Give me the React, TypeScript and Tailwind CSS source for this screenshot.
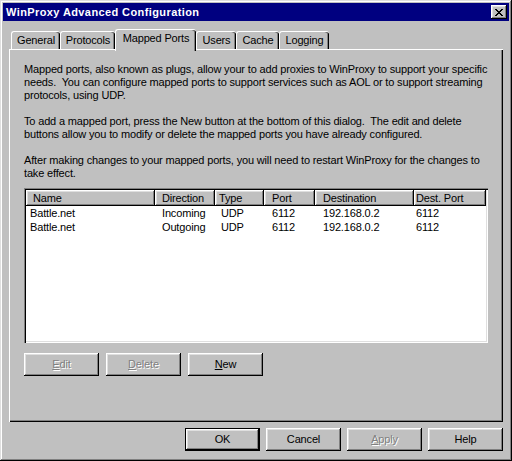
import type { ReactNode } from 'react'

const font = "font-['Liberation_Sans',Arial,sans-serif]"

const raised =
  'shadow-[inset_-1px_-1px_0_#000,inset_1px_1px_0_#fff,inset_-2px_-2px_0_#808080,inset_2px_2px_0_#dfdfdf]'

const tabs = [
  { label: 'General', w: 'w-[49px]' },
  { label: 'Protocols', w: 'w-[55px]' },
  { label: 'Mapped Ports', w: 'w-[81px]', active: true },
  { label: 'Users', w: 'w-[40px]' },
  { label: 'Cache', w: 'w-[43px]' },
  { label: 'Logging', w: 'w-[50px]' },
]

const columns = [
  { label: 'Name', w: 'w-[129px]', pl: 'pl-[7px]', rowPl: 'pl-[4px]' },
  { label: 'Direction', w: 'w-[60px]', pl: 'pl-[7px]', rowPl: 'pl-[7px]' },
  { label: 'Type', w: 'w-[49px]', pl: 'pl-[4px]', rowPl: 'pl-[6px]' },
  { label: 'Port', w: 'w-[51px]', pl: 'pl-[8px]', rowPl: 'pl-[8px]' },
  { label: 'Destination', w: 'w-[99px]', pl: 'pl-[8px]', rowPl: 'pl-[8px]' },
  { label: 'Dest. Port', w: 'w-[72px]', pl: 'pl-[2px]', rowPl: 'pl-[2px]' },
]

const rows = [
  ['Battle.net', 'Incoming', 'UDP', '6112', '192.168.0.2', '6112'],
  ['Battle.net', 'Outgoing', 'UDP', '6112', '192.168.0.2', '6112'],
]

function Button({
  children,
  disabled,
  isDefault,
}: {
  children: ReactNode
  disabled?: boolean
  isDefault?: boolean
}) {
  return (
    <button
      className={
        'flex h-[23px] w-[75px] items-center justify-center bg-[#c0c0c0] text-[11px] leading-none ' +
        (isDefault ? 'border border-black ' : '') +
        raised +
        ' ' +
        (disabled ? 'text-[#808080] [text-shadow:1px_1px_0_#fff]' : 'text-black')
      }
    >
      {children}
    </button>
  )
}

function Para({ lines, last }: { lines: string[]; last?: boolean }) {
  return (
    <div className={last ? 'mb-[8px]' : 'mb-[13px]'}>
      {lines.map((l) => (
        <div key={l} className="h-[13px] whitespace-pre leading-[13px]">
          {l}
        </div>
      ))}
    </div>
  )
}

export default function App() {
  return (
    <div
      className={`${font} flex h-[461px] w-[512px] flex-col bg-[#c0c0c0] p-[3px] text-[11px] tracking-[-0.16px] text-black shadow-[inset_-1px_-1px_0_#000,inset_1px_1px_0_#dfdfdf,inset_-2px_-2px_0_#808080,inset_2px_2px_0_#fff]`}
    >
      {/* title bar */}
      <div className="flex h-[18px] items-center justify-between bg-[#000080] pl-[3px] pr-[2px]">
        <span className="text-[11px] font-bold tracking-[0.4px] text-white">
          WinProxy Advanced Configuration
        </span>
        <div
          className={`flex h-[14px] w-[16px] items-center justify-center bg-[#c0c0c0] ${raised}`}
        >
          <svg width="8" height="7" viewBox="0 0 8 7" shapeRendering="crispEdges">
            <path
              d="M0 0h2v1h1v1h2V1h1V0h2v1H7v1H6v1H5v1h1v1h1v1h1v1H6V6H5V5H3v1H2v1H0V6h1V5h1V4h1V3H2V2H1V1H0z"
              fill="#000"
            />
          </svg>
        </div>
      </div>

      {/* tabs */}
      <div className="mt-[8px] flex h-[20px] items-end pl-[8px]">
        {tabs.map((t) => (
          <div
            key={t.label}
            className={
              `${t.w} flex items-start justify-center rounded-t-[3px] border-l border-t border-white bg-[#c0c0c0] shadow-[inset_-1px_0_0_#000,inset_-2px_0_0_#808080] ` +
              (t.active ? 'relative z-10 -mb-[2px] h-[22px] pt-[2px]' : 'h-[18px] pt-[2px]')
            }
          >
            <span className="leading-[13px]">{t.label}</span>
          </div>
        ))}
      </div>

      {/* panel */}
      <div className="mx-[6px] flex h-[373px] flex-col border-l border-t border-white px-[14px] pt-[13px] shadow-[inset_-1px_-1px_0_#000,inset_-2px_-2px_0_#808080]">
        <Para
          lines={[
            'Mapped ports, also known as plugs, allow your to add proxies to WinProxy to support your specific',
            'needs.  You can configure mapped ports to support services such as AOL or to support streaming',
            'protocols, using UDP.',
          ]}
        />
        <Para
          lines={[
            'To add a mapped port, press the New button at the bottom of this dialog.  The edit and delete',
            'buttons allow you to modify or delete the mapped ports you have already configured.',
          ]}
        />
        <Para
          last
          lines={[
            'After making changes to your mapped ports, you will need to restart WinProxy for the changes to',
            'take effect.',
          ]}
        />

        {/* list view */}
        <div className="h-[155px] w-[464px] bg-white p-[2px] shadow-[inset_1px_1px_0_#808080,inset_2px_2px_0_#000,inset_-1px_-1px_0_#fff,inset_-2px_-2px_0_#dfdfdf]">
          <div className="flex h-[16px]">
            {columns.map((c) => (
              <div
                key={c.label}
                className={`${c.w} ${c.pl} flex items-center bg-[#c0c0c0] leading-none ${raised}`}
              >
                {c.label}
              </div>
            ))}
          </div>
          {rows.map((r, i) => (
            <div key={i} className="flex h-[14px] items-center">
              {r.map((cell, j) => (
                <div key={j} className={`${columns[j].w} ${columns[j].rowPl} leading-none`}>
                  {cell}
                </div>
              ))}
            </div>
          ))}
        </div>

        <div className="mt-[10px] flex gap-[7px]">
          <Button disabled>
            <span className="underline">E</span>dit
          </Button>
          <Button disabled>
            <span className="underline">D</span>elete
          </Button>
          <Button>
            <span className="underline">N</span>ew
          </Button>
        </div>
      </div>

      {/* bottom buttons */}
      <div className="mr-[6px] mt-[6px] flex justify-end gap-[6px]">
        <Button isDefault>OK</Button>
        <Button>Cancel</Button>
        <Button disabled>
          <span className="underline">A</span>pply
        </Button>
        <Button>Help</Button>
      </div>
    </div>
  )
}
